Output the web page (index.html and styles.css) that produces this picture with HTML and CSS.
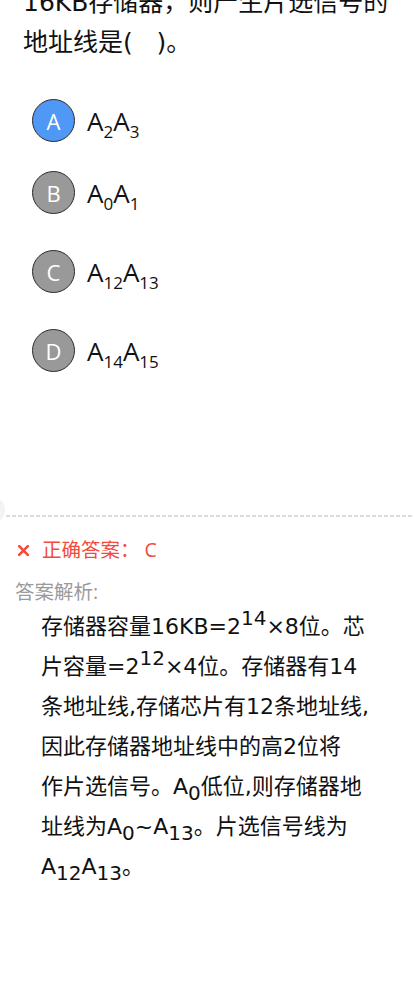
FILE: index.html
```html
<!DOCTYPE html>
<html lang="zh-CN">
<head>
<meta charset="utf-8">
<title>题目解析</title>
<link rel="stylesheet" href="styles.css">
</head>
<body>
<main class="page">
  <p class="question">16KB存储器，则产生片选信号的<br>地址线是(&nbsp;&nbsp;&nbsp;)。</p>

  <ul class="options">
    <li class="option option--first">
      <span class="badge badge--chosen">A</span>
      <span class="option-text">A<sub>2</sub>A<sub>3</sub></span>
    </li>
    <li class="option">
      <span class="badge">B</span>
      <span class="option-text">A<sub>0</sub>A<sub>1</sub></span>
    </li>
    <li class="option">
      <span class="badge">C</span>
      <span class="option-text">A<sub>12</sub>A<sub>13</sub></span>
    </li>
    <li class="option">
      <span class="badge">D</span>
      <span class="option-text">A<sub>14</sub>A<sub>15</sub></span>
    </li>
  </ul>

  <section class="analysis">
    <div class="divider"></div>
    <p class="result">
      <svg class="result-icon" viewBox="0 0 11 11" width="11" height="11" aria-hidden="true">
        <path d="M1.2 1.2 L9.8 9.8 M9.8 1.2 L1.2 9.8" stroke="currentColor" stroke-width="2.6" stroke-linecap="square" fill="none"/>
      </svg>
      <span>正确答案： C</span>
    </p>
    <p class="analysis-label">答案解析:</p>
    <p class="analysis-body">存储器容量16KB=2<sup>14</sup>×8位。芯<br>片容量=2<sup>12</sup>×4位。存储器有14<br>条地址线,存储芯片有12条地址线,<br>因此存储器地址线中的高2位将<br>作片选信号。A<sub>0</sub>低位,则存储器地<br>址线为A<sub>0</sub>~A<sub>13</sub>。片选信号线为<br>A<sub>12</sub>A<sub>13</sub>。</p>
  </section>
</main>
</body>
</html>
```

FILE: styles.css
```css
* {
  box-sizing: border-box;
}

html, body {
  margin: 0;
  padding: 0;
  background: #ffffff;
}

body {
  font-family: "Open Sans", "Noto Sans CJK SC", sans-serif;
  color: #111111;
  overflow: hidden;
}

.page {
  width: 414px;
}

.question {
  margin: -17px 0 0;
  padding: 0 23px;
  font-family: "DejaVu Sans", "Noto Sans CJK SC", sans-serif;
  font-size: 25px;
  line-height: 40px;
  white-space: nowrap;
}

.options {
  list-style: none;
  margin: 36px 0 0;
  padding: 0 0 0 32px;
  display: flex;
  flex-direction: column;
  gap: 36px;
}

.option {
  display: flex;
  align-items: center;
  gap: 12px;
  height: 43px;
}

.option--first {
  margin-bottom: -7px;
}

.badge {
  width: 43px;
  height: 43px;
  flex: none;
  border-radius: 50%;
  border: 1px solid #2b2b2b;
  background: #999999;
  color: #ffffff;
  font-size: 22px;
  display: flex;
  align-items: center;
  justify-content: center;
  line-height: 1;
}

.badge--chosen {
  background: #4f98f6;
}

.option-text {
  font-size: 26px;
  line-height: 1;
  color: #111111;
}

.option-text sub {
  font-size: 17px;
  line-height: 0;
  vertical-align: -7px;
}

.analysis {
  position: relative;
  margin-top: 143px;
}

.analysis::before {
  content: "";
  position: absolute;
  left: -23px;
  top: -19px;
  width: 28px;
  height: 28px;
  border-radius: 50%;
  background: #f2f3f5;
}

.divider {
  margin-left: 6px;
  height: 2px;
  background: repeating-linear-gradient(to right, #dcdcdc 0 4px, transparent 4px 6px);
}

.result {
  margin: 19px 0 0;
  padding-left: 18px;
  display: flex;
  align-items: center;
  gap: 13px;
  height: 28px;
  font-size: 19.5px;
  line-height: 28px;
  color: #f5493d;
}

.result-icon {
  flex: none;
}

.analysis-label {
  margin: 14px 0 0;
  padding-left: 15px;
  font-size: 19.5px;
  line-height: 28px;
  color: #9a9a9a;
}

.analysis-body {
  margin: 1px 0 0;
  padding-left: 41px;
  font-family: "DejaVu Sans", "Noto Sans CJK SC", sans-serif;
  font-size: 22px;
  line-height: 40px;
  color: #111111;
  white-space: nowrap;
}

.analysis-body sup {
  font-size: 20px;
  line-height: 0;
  vertical-align: 9px;
}

.analysis-body sub {
  font-size: 20px;
  line-height: 0;
  vertical-align: -6px;
}
```
